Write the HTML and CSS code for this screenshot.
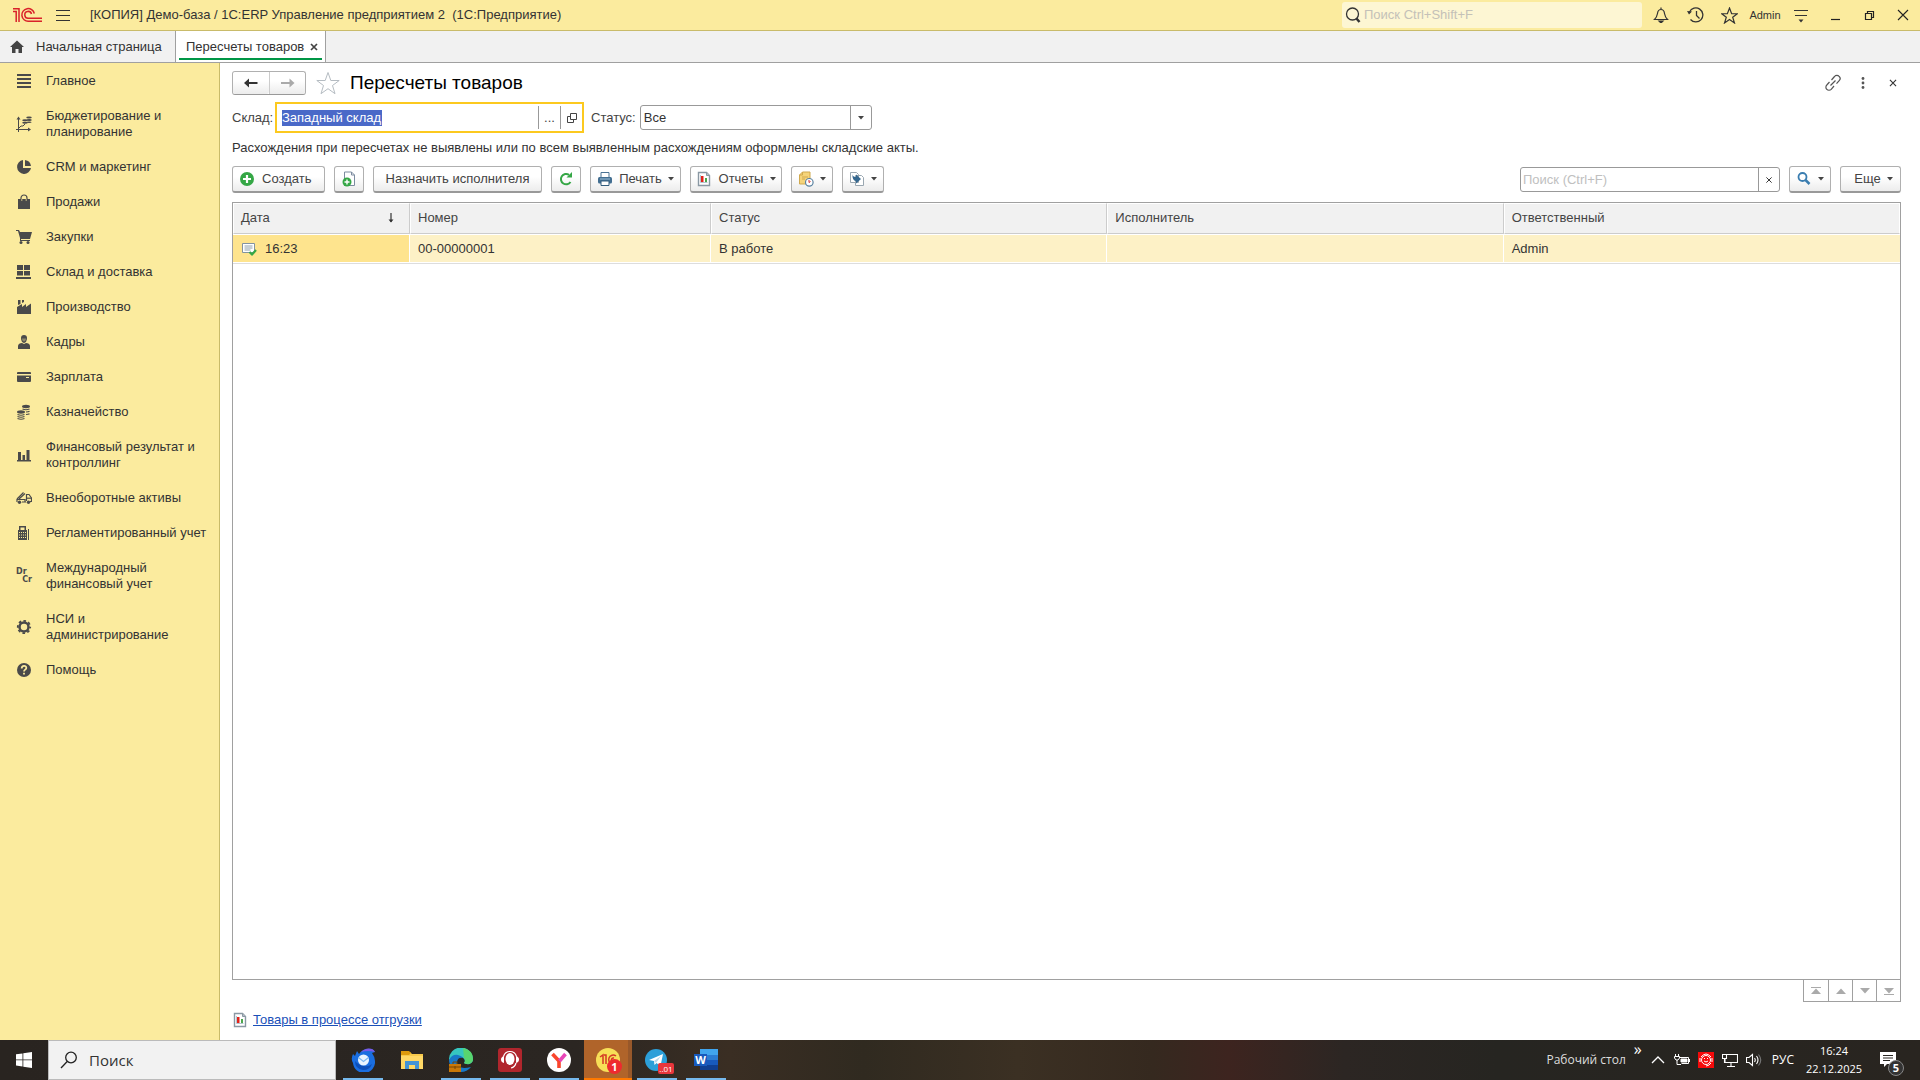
FILE: index.html
```html
<!DOCTYPE html>
<html lang="ru">
<head>
<meta charset="utf-8">
<title>Пересчеты товаров</title>
<link rel="stylesheet" href="styles.css">
</head>
<body>
<svg class="defs" width="0" height="0" aria-hidden="true">
  <symbol id="report" viewBox="0 0 16 16"><path d="M2.500 1.500h8l3 3v10h-11z" fill="#fff" stroke="#8a98a3" stroke-width="1.400"/><path d="M10.500 1.500v3h3" fill="#b4bec6" stroke="#8a98a3"/><path d="M4.500 4v7.500h7" fill="none" stroke="#b5c5d0"/><path d="M5 5h2.500v6H5z" fill="#e2231a"/><path d="M9 7h2v4H9z" fill="#4ca64c"/></symbol>
  <symbol id="close" viewBox="0 0 16 16"><path d="M4.500 4.500l7 7m0-7l-7 7" fill="none" stroke="currentColor" stroke-width="1.300"/></symbol>
  <symbol id="caret" viewBox="0 0 6 4"><path d="M0 0h6L3 3.500z" fill="currentColor"/></symbol>
</svg>
<div class="app">
  <header class="titlebar">
    <svg class="logo" width="31" height="18" viewBox="0 0 31 18" fill="none" stroke="#d9222a" stroke-width="1.500"><path d="M1 5.500h3.200V16M1 2.800h6V16"/><path d="M22.300 7.500A6.300 6.300 0 1 0 16.500 15.200h13.500M19.500 8A3.400 3.400 0 1 0 16.500 12.200h13.500"/></svg>
    <button class="flat" aria-label="Меню"><svg width="16" height="16" viewBox="0 0 16 16" stroke="#333" stroke-width="1"><path d="M1 3.500h14M1 8.500h14M1 13.500h14"/></svg></button>
    <div class="app-name">[КОПИЯ] Демо-база / 1С:ERP Управление предприятием 2&nbsp; (1С:Предприятие)</div>
    <label class="global-search"><svg width="16" height="18" viewBox="0 0 16 18" fill="none" stroke="#333"><circle cx="7.500" cy="8" r="6" stroke-width="1.300"/><path d="M11.500 12.500l3 3.500" stroke-width="2.500"/></svg><input type="text" placeholder="Поиск Ctrl+Shift+F" aria-label="Поиск"></label>
    <div class="title-tools">
      <button class="flat tool" aria-label="Уведомления"><svg width="16" height="16" viewBox="0 0 16 16" fill="none" stroke="#333" stroke-width="1.200"><path d="M8 .5v2M1.500 12.500h13c-2-2-2.500-3-3-6C11.200 3.500 10 2.500 8 2.500S4.800 3.500 4.500 6.500c-.5 3-1 4-3 6z"/><path d="M6 14h4l-2 2z" fill="#333"/></svg></button>
      <button class="flat tool" aria-label="История"><svg width="17" height="16" viewBox="0 0 17 16" fill="none" stroke="#333" stroke-width="1.300"><path d="M2.500 5A7 7 0 1 1 3.500 12.500M9.500 4v4.500l3 3"/><path d="M0 4l5 .5-3 3z" fill="#333" stroke="none"/></svg></button>
      <button class="flat tool" aria-label="Избранное"><svg width="17" height="17" viewBox="0 0 24 24" fill="none" stroke="#333" stroke-width="1.700"><path d="M12 1.500l3 8h8l-6.500 5 2.500 8-7-5-7 5 2.500-8L1 9.500h8z"/></svg></button>
      <button class="flat user">Admin</button>
      <button class="flat tool" aria-label="Сервис"><svg width="16" height="16" viewBox="0 0 16 16"><path d="M1 3.500h14M2 8.500h12" stroke="#333" stroke-width="1.200"/><path d="M5.500 12.500h5L8 15.500z" fill="#333"/></svg></button>
      <button class="flat tool" aria-label="Свернуть"><svg width="16" height="16" viewBox="0 0 16 16"><path d="M4 12.500h9" stroke="#222" stroke-width="1.200"/></svg></button>
      <button class="flat tool" aria-label="Развернуть"><svg width="16" height="16" viewBox="0 0 16 16" fill="none" stroke="#222" stroke-width="1.200"><path d="M4.500 6.500h6v6h-6zM6.500 6V4.500h6v6H11"/></svg></button>
      <button class="flat tool" aria-label="Закрыть"><svg width="16" height="16" viewBox="0 0 16 16" stroke="#222" stroke-width="1.100"><path d="M3 3l10 10M13 3L3 13"/></svg></button>
    </div>
  </header>
  <nav class="tabs">
    <a class="tab home" href="#"><svg width="16" height="16" viewBox="0 0 16 16" fill="#444"><path d="M8 1.500L1 8h2v6h3.500v-4h3v4H13V8h2z"/></svg>Начальная страница</a>
    <a class="tab active" href="#"><span>Пересчеты товаров</span><svg width="8" height="8" viewBox="0 0 8 8" stroke="#444" stroke-width="1.700"><path d="M1 1l6 6M7 1L1 7"/></svg></a>
  </nav>
  <div class="body">
    <nav class="sidebar">
      <a href="#"><svg viewBox="0 0 16 16"><path d="M1 1h14v2H1zM1 5h14v2H1zM1 9h14v2H1zM1 13h14v2H1z"/></svg><span>Главное</span></a>
      <a href="#"><svg viewBox="0 0 16 16"><path d="M2.500 2v14M0 13.500h13" stroke="#4a4a4a"/><path d="M.5 3.500l2-3 2 3zM12 11.500l3 2-3 2z"/><path d="M3 12l2-2h2l2-2" fill="none" stroke="#4a4a4a"/><ellipse cx="9" cy="4.300" rx="2.800" ry="1"/><ellipse cx="9" cy="6.700" rx="2.800" ry="1"/><ellipse cx="13" cy="1.600" rx="2.800" ry="1"/><ellipse cx="13.200" cy="4" rx="2.600" ry="1"/><ellipse cx="13" cy="6.200" rx="2.600" ry=".8"/></svg><span>Бюджетирование и планирование</span></a>
      <a href="#"><svg viewBox="0 0 16 16"><path d="M7 1v8h8A7 7 0 1 1 7 1z"/><path d="M9 1a7 7 0 0 1 6 6H9z"/></svg><span>CRM и маркетинг</span></a>
      <a href="#"><svg viewBox="0 0 16 16"><path d="M2 5h12v10H2z"/><path d="M5 7V4a3 3 0 0 1 6 0v3" fill="none" stroke="#4a4a4a" stroke-width="1.200"/><path d="M5.800 5v2M10.200 5v2" stroke="#fbeb9e" stroke-width=".7"/></svg><span>Продажи</span></a>
      <a href="#"><svg viewBox="0 0 16 16"><path d="M0 1h3l1 2h12l-2 7H5v1h9v1H4V9L2 2H0z"/><circle cx="5" cy="13.500" r="1.500"/><circle cx="12" cy="13.500" r="1.500"/></svg><span>Закупки</span></a>
      <a href="#"><svg viewBox="0 0 16 16"><path d="M1 1h6v5H1zM8 1h6v5H8zM1 7h6v4.500H1zM8 7h6v4.500H8zM0 13h15v2H0z"/></svg><span>Склад и доставка</span></a>
      <a href="#"><svg viewBox="0 0 16 16"><path d="M1 15V8l5-3v3l4-3v3l5-3.500V15zM2 1h2.500v4L2 6zM6 1h2v2L6 4z"/></svg><span>Производство</span></a>
      <a href="#"><svg viewBox="0 0 16 16"><path d="M5 4a3 3 0 0 1 6 0c0 2.500-1.200 5-3 5S5 6.500 5 4z"/><path d="M2 15v-3c0-2 2-3 4-3l2 1 2-1c2 0 4 1 4 3v3z"/><path d="M6 4.500h4c0 2-1 3-2 3s-2-1-2-3z" fill="#8f896b"/></svg><span>Кадры</span></a>
      <a href="#"><svg viewBox="0 0 16 16"><path d="M1 4q0-1 1-1h12q1 0 1 1v1H1zM1 6.500h14V12q0 1-1 1H2q-1 0-1-1z"/><path d="M10 8.500h3" stroke="#fbeb9e"/></svg><span>Зарплата</span></a>
      <a href="#"><svg viewBox="0 0 16 16"><ellipse cx="10" cy="2.500" rx="4" ry="1.700"/><path d="M6.500 5q3.500 1.500 7 0M10 8q2.500 0 3.500-.7M10 10.500q2.500 0 3.500-.7" fill="none" stroke="#4a4a4a" stroke-width="1.200"/><ellipse cx="5" cy="8" rx="4" ry="1.700"/><path d="M1.500 10.500q3.500 1.500 7 0M1.500 12.500q3.500 1.500 7 0M1.500 14.500q3.500 1.500 7 0" fill="none" stroke="#4a4a4a" stroke-width="1.100"/></svg><span>Казначейство</span></a>
      <a href="#"><svg viewBox="0 0 16 16"><path d="M1 13h14v1.500H1zM2 5h3v8H2zM6.500 8h2.500v5H6.500zM10.500 3h3v10h-3z"/></svg><span>Финансовый результат и контроллинг</span></a>
      <a href="#"><svg viewBox="0 0 16 16"><g fill="none" stroke="#4a4a4a" stroke-width="1.200"><path d="M1 12V9.500h8V12M6 12h4M1 9L7.500 2.500M3 9l6-5.500M10.500 11V4.500H13l2.500 3.500V11.500H14"/><path d="M10.500 8.200h5"/></g><circle cx="3.500" cy="12.300" r="1.700"/><circle cx="12.500" cy="12.300" r="1.700"/></svg><span>Внеоборотные активы</span></a>
      <a href="#"><svg viewBox="0 0 16 16"><path d="M2 5h1V1h7v4h1v10H2z"/><path d="M4.500 2.500h4V5h-4z" fill="#fbeb9e"/><path d="M3 7.500h7M3 10h7M3 12.500h7" stroke="#fbeb9e" stroke-dasharray="1 1"/><path d="M12.500 4v11" stroke="#4a4a4a"/></svg><span>Регламентированный учет</span></a>
      <a href="#"><span class="drcr"><b>Dr</b><b>Cr</b></span><span>Международный финансовый учет</span></a>
      <a href="#"><svg viewBox="0 0 16 16"><circle cx="8" cy="8" r="4.500" fill="none" stroke="#4a4a4a" stroke-width="2.500"/><circle cx="8" cy="8" r="6.200" fill="none" stroke="#4a4a4a" stroke-width="1.800" stroke-dasharray="2.600 2.270" stroke-dashoffset="1.300"/></svg><span>НСИ и администрирование</span></a>
      <a href="#"><svg viewBox="0 0 16 16"><circle cx="8" cy="8" r="7"/><path d="M5.700 6.500C5.700 3 10.500 3.200 10.300 6c0 1.600-2.300 1.700-2.300 3.500M8 10.700v1.800" fill="none" stroke="#fbeb9e" stroke-width="1.800"/></svg><span>Помощь</span></a>
    </nav>
    <main class="content">
      <div class="heading">
        <div class="history">
          <button aria-label="Назад"><svg width="16" height="12" viewBox="0 0 16 12"><path d="M4 6h10.500" stroke="#333" stroke-width="2"/><path d="M1 6l5-4.500v9z" fill="#333"/></svg></button>
          <button aria-label="Вперед"><svg width="16" height="12" viewBox="0 0 16 12"><path d="M1 6h10.500" stroke="#aaa" stroke-width="2"/><path d="M14.500 6l-5-4.500v9z" fill="#aaa"/></svg></button>
        </div>
        <button class="flat star" aria-label="В избранное"><svg width="24" height="24" viewBox="0 0 24 24" fill="#fff" stroke="#b5bcc2"><path d="M12 1.500l2.800 8h8.400l-6.700 5 2.500 8.200-7-5-7 5 2.500-8.200L.8 9.500h8.400z"/></svg></button>
        <h1>Пересчеты товаров</h1>
        <div class="form-tools">
          <button class="flat" aria-label="Ссылка"><svg width="18" height="18" viewBox="0 0 18 18" fill="none" stroke="#555" stroke-width="1.200"><path d="M7.500 6l3-3.500a3 3 0 0 1 4.700 0 3 3 0 0 1 0 4.200l-2.700 3M5.500 8L2.800 11a3 3 0 0 0 0 4.300 3 3 0 0 0 4.400 0L10 12M6.500 11.500l5-5"/></svg></button>
          <button class="flat" aria-label="Еще действия"><svg width="18" height="18" viewBox="0 0 18 18" fill="#555"><circle cx="9" cy="4.500" r="1.400"/><circle cx="9" cy="9" r="1.400"/><circle cx="9" cy="13.500" r="1.400"/></svg></button>
          <button class="flat" aria-label="Закрыть форму"><svg width="14" height="14"><use href="#close"/></svg></button>
        </div>
      </div>
      <div class="filters">
        <label for="store">Склад:</label>
        <div class="field">
          <div class="value"><input id="store" class="selected-text" type="text" value="Западный склад"></div>
          <button aria-label="Выбрать">...</button>
          <button aria-label="Открыть"><svg width="10" height="10" viewBox="0 0 10 10" fill="none" stroke="#444"><path d="M3.500.5h6v6h-6zM3 3.500H.5v6h6V7"/></svg></button>
        </div>
        <label for="status">Статус:</label>
        <div class="select"><select id="status"><option>Все</option></select><span><svg width="6" height="4"><use href="#caret"/></svg></span></div>
      </div>
      <p class="notice">Расхождения при пересчетах не выявлены или по всем выявленным расхождениям оформлены складские акты.</p>
      <div class="toolbar">
        <button class="btn create"><svg width="16" height="16" viewBox="0 0 16 16"><circle cx="8" cy="8" r="7" fill="#35a746"/><path d="M8 4v8M4 8h8" stroke="#fff" stroke-width="2.200"/></svg>Создать</button>
        <button class="btn square" aria-label="Создать копированием"><svg width="16" height="16" viewBox="0 0 16 16"><path d="M3.500 1h7l3 3v10.500h-10z" fill="#fff" stroke="#7c8ca0"/><path d="M10.500 1v3h3" fill="none" stroke="#7c8ca0"/><circle cx="6" cy="11" r="4.500" fill="#35a746"/><path d="M6 8.500v5M3.500 11h5" stroke="#fff" stroke-width="1.400"/></svg></button>
        <button class="btn assign">Назначить исполнителя</button>
        <button class="btn square" aria-label="Обновить"><svg width="16" height="16" viewBox="0 0 16 16"><path d="M12.500 11A5.200 5.200 0 1 1 11 3.800" fill="none" stroke="#35a746" stroke-width="2"/><path d="M8.500 6.500H14V1z" fill="#35a746"/></svg></button>
        <button class="btn print"><svg width="16" height="16" viewBox="0 0 16 16"><path d="M4 1.500h8v5H4z" fill="#fff" stroke="#4b7394"/><rect x="1" y="6" width="14" height="6.500" rx="1.500" fill="#426e91"/><path d="M4 10h8v4.500H4z" fill="#fff" stroke="#335d7e"/><path d="M3 8h10" stroke="#9fc0d8"/></svg>Печать<svg class="caret" width="6" height="4"><use href="#caret"/></svg></button>
        <button class="btn reports"><svg width="16" height="16"><use href="#report"/></svg>Отчеты<svg class="caret" width="6" height="4"><use href="#caret"/></svg></button>
        <button class="btn drop" aria-label="Напоминания"><svg width="16" height="16" viewBox="0 0 16 16"><path d="M1.500 4l3-3H12v12H1.500z" fill="#f5d47a" stroke="#d0a94e"/><path d="M1.500 4h3V1M4 6h6M4 8h3" fill="none" stroke="#d0a94e"/><circle cx="11.300" cy="11.300" r="3.800" fill="#fff" stroke="#58809f" stroke-width="1.200"/><path d="M11 9v2.500l1.500-1" fill="none" stroke="#d42d2d"/></svg><svg class="caret" width="6" height="4"><use href="#caret"/></svg></button>
        <button class="btn drop" aria-label="Создать на основании"><svg width="16" height="16" viewBox="0 0 16 16"><path d="M1.500 1.500h6l2 2v8h-8zM6.500 4.500h6l2 2v8h-8z" fill="#fff" stroke="#9aa7b1"/><path d="M3.500 3q0 3 3.500 3V3.500l5 4.500-5 4.500V10Q3 9.500 3.500 3z" fill="#34678f"/></svg><svg class="caret" width="6" height="4"><use href="#caret"/></svg></button>
        <div class="list-search"><input type="text" placeholder="Поиск (Ctrl+F)" aria-label="Поиск в списке"><button aria-label="Очистить"><svg width="12" height="12"><use href="#close"/></svg></button></div>
        <button class="btn drop" aria-label="Найти"><svg width="16" height="16" viewBox="0 0 16 16" fill="none" stroke="#3a7db0"><circle cx="6.500" cy="6" r="4" stroke-width="1.800"/><path d="M9.500 9l4 4" stroke-width="2.500"/></svg><svg class="caret" width="6" height="4"><use href="#caret"/></svg></button>
        <button class="btn more">Еще<svg class="caret" width="6" height="4"><use href="#caret"/></svg></button>
      </div>
      <div class="list">
        <table>
          <colgroup><col class="c-date"><col class="c-num"><col><col><col></colgroup>
          <thead><tr><th><div class="sorted">Дата<svg width="8" height="10" viewBox="0 0 8 10"><path d="M4 0v9" stroke="#333" stroke-width="1.200"/><path d="M1.500 6.500l2.500 3 2.500-3z" fill="#333"/></svg></div></th><th>Номер</th><th>Статус</th><th>Исполнитель</th><th>Ответственный</th></tr></thead>
          <tbody><tr><td class="current"><div class="date"><svg width="16" height="16" viewBox="0 0 16 16"><path d="M1.500 2.500h12v9h-12z" fill="#fff" stroke="#8393a0"/><path d="M3.500 5h8M3.500 7h8M3.500 9h6" stroke="#8fa0ac"/><path d="M8.500 11l2.500 2.500L15 9" fill="none" stroke="#35a746" stroke-width="2.200"/></svg>16:23</div></td><td>00-00000001</td><td>В работе</td><td></td><td>Admin</td></tr></tbody>
        </table>
      </div>
      <div class="pager">
        <button aria-label="В начало"><svg width="10" height="8" viewBox="0 0 10 8"><path d="M0 .5h10" stroke="#aaa"/><path d="M0 7h10L5 1.500z" fill="#aaa"/></svg></button>
        <button aria-label="Вверх"><svg width="10" height="8" viewBox="0 0 10 8"><path d="M0 7h10L5 1.500z" fill="#aaa"/></svg></button>
        <button aria-label="Вниз"><svg width="10" height="8" viewBox="0 0 10 8"><path d="M0 1h10L5 6.500z" fill="#aaa"/></svg></button>
        <button aria-label="В конец"><svg width="10" height="8" viewBox="0 0 10 8"><path d="M0 7.500h10" stroke="#aaa"/><path d="M0 1h10L5 6.500z" fill="#aaa"/></svg></button>
      </div>
      <div class="related"><svg width="16" height="16"><use href="#report"/></svg><a href="#">Товары в процессе отгрузки</a></div>
    </main>
  </div>
</div>
<footer class="taskbar">
  <button class="start" aria-label="Пуск"><svg width="16" height="16" viewBox="0 0 16 16" fill="#fff"><path d="M0 2.300L6.500 1.400v6.100H0zM7.300 1.300L16 0v7.500H7.300zM0 8.300h6.500v6.200L0 13.600zM7.300 8.300H16V16l-8.700-1.300z"/></svg></button>
  <label class="win-search"><svg width="18" height="18" viewBox="0 0 18 18" fill="none" stroke="#222" stroke-width="1.300"><circle cx="11" cy="6.500" r="5.300"/><path d="M7.200 10.500L1 17"/></svg><input type="text" placeholder="Поиск" aria-label="Поиск в Windows"></label>
  <div class="apps">
    <button class="running" aria-label="Thunderbird"><svg viewBox="0 0 24 24"><path d="M2 6l2 2 2-5 2 3Q12 0 21 1q2 1 3 3l-3 1q3 4 3 8a11 11 0 0 1-22 2Q-.5 11 2 6z" fill="#1a6ee0"/><path d="M10 4q5-5 11-3 2 1 3 3-7-2-14 0z" fill="#7a5be6"/><path d="M4 13q0 8 8 9 7 0 9-6-4 3-8 2-6-1-9-5z" fill="#0d4fb8"/><ellipse cx="12.500" cy="12" rx="5.500" ry="5.500" fill="#e9f5ff"/><path d="M7.500 9.500l5 4 5-4" fill="none" stroke="#7fb8f0" stroke-width="1.200"/></svg></button>
    <button aria-label="Проводник"><svg viewBox="0 0 24 24"><path d="M1 4h9l2 2h11v15H1z" fill="#f7c94b"/><path d="M1 3h8l2 2-2 2H1z" fill="#dd9a0d"/><path d="M1 8h22v13H1z" fill="#ffd866"/><path d="M5 21v-8h14v8h-4v-4H9v4z" fill="#4394d6"/></svg></button>
    <button class="running" aria-label="Edge"><svg viewBox="0 0 24 24"><path d="M0 12a12 12 0 0 1 24-1c0 6-7 6-9 4 2-2 0-6-4-6-5 0-11 3-11 3z" fill="#36c6c0"/><path d="M14 0q10 2 10 11c0 5-6 6-9 4 2-2 1-4 0-5z" fill="#58d56e"/><path d="M0 12q3-6 9-5 4 1 5 3-6-1-6 5 1 7 14 4-4 5-10 5A12 12 0 0 1 0 12z" fill="#1878c7"/><path d="M0 16h12v8H0z" fill="#c97808"/><path d="M0 19h12M4 16v-2h4v2M6 18v3" fill="none" stroke="#784400"/></svg></button>
    <button class="running" aria-label="Поддержка"><svg viewBox="0 0 24 24"><rect width="24" height="24" rx="3" fill="#b0262d"/><path d="M5.500 8.500Q7 3.500 12 3.500t6.500 5" fill="none" stroke="#fff" stroke-width="1.200"/><ellipse cx="12" cy="11" rx="4.500" ry="6" fill="#fff"/><path d="M6 8v7q-3-1-3-3.500T6 8zM18 8v7q3-1 3-3.500T18 8z" fill="#fff"/><path d="M18 15q-1 4-5 5" fill="none" stroke="#fff" stroke-width="1.200"/></svg></button>
    <button class="running" aria-label="Яндекс Браузер"><svg viewBox="0 0 24 24"><circle cx="12" cy="12" r="12" fill="#fff"/><path d="M5.500 6l6.500 7v7" fill="none" stroke="#f9452c" stroke-width="3.600"/><path d="M12.500 13l6-7" stroke="#e945b8" stroke-width="3.600"/></svg></button>
    <button class="running current-app" aria-label="1С:Предприятие"><svg viewBox="0 0 24 24"><circle cx="12" cy="12" r="12" fill="#f7df57"/><path d="M4 9l3-2v9M8 7h2v9M20 8a4.500 4.500 0 1 0-3 8h5M18 10a2 2 0 1 0-1 4" fill="none" stroke="#d43825" stroke-width="1.500"/></svg><span class="count">1</span></button>
    <button class="running" aria-label="Telegram"><svg viewBox="0 0 24 24"><circle cx="11" cy="12" r="11" fill="#2c9fd9"/><path d="M4 12l14-6-2.500 12-4-3-2 2-.5-4z" fill="#fff"/><path d="M9 13l7-5-5 7" fill="#b7d9ec"/></svg><span class="unread">..01</span></button>
    <button class="running" aria-label="Word"><svg viewBox="0 0 24 24"><path d="M6 1h18v6H6z" fill="#41a5ee"/><path d="M6 7h18v5H6z" fill="#2b7cd3"/><path d="M6 12h18v5H6z" fill="#185abd"/><path d="M6 17h18v5H6z" fill="#103f91"/><path d="M0 6h13v12H0z" fill="#185abd"/></svg><span class="word">W</span></button>
  </div>
  <div class="tray">
    <span class="desktop">Рабочий стол</span><span class="chev">»</span>
    <svg width="16" height="16" viewBox="0 0 16 16" fill="none" stroke="#fff" stroke-width="1.300"><path d="M2 11l6-6 6 6"/></svg>
    <svg width="16" height="16" viewBox="0 0 16 16" fill="none" stroke="#fff"><path d="M5.500 5.500h9v6h-7M1.500 2v2M4.500 2v2M.5 4.500h5V6l-1.500 2H2L.5 6zM3 8v4.500h4M15.500 7v3"/><path d="M7 7h6v3H7z" fill="#fff"/></svg>
    <svg width="16" height="16" viewBox="0 0 16 16"><path d="M0 0h16v16H0z" fill="#f50a0a"/><circle cx="8" cy="8" r="4.500" fill="none" stroke="#fff"/><path d="M2 6v4M14 6v4M3 5q5-6 10 0M13 11q-2 3-5 3M6 9q2 2 4 0M6.500 6v1M9.500 6v1" fill="none" stroke="#fff"/></svg>
    <svg width="16" height="16" viewBox="0 0 16 16" fill="none" stroke="#fff" stroke-width="1.100"><path d="M5 2.500h10.500v8H3V7M5 14.500h8M9 11v3M.5 2.500h4v4h-4zM2.500 6v5"/></svg>
    <svg width="16" height="16" viewBox="0 0 16 16" fill="none" stroke="#fff" stroke-width="1.100"><path d="M.5 5.500H3l3.500-3v11L3 10.500H.5zM8.500 6q1.500 2 0 4M10.500 4q3 4 0 8"/><path d="M12.500 2.500q4.500 5.500 0 11" stroke="#777"/></svg>
    <span class="lang">РУС</span>
    <span class="clock">16:24<br>22.12.2025</span>
    <button class="messages" aria-label="Центр уведомлений"><svg width="16" height="16" viewBox="0 0 16 16"><path d="M0 0h16v12H7l-3 3v-3H0z" fill="#fff"/><path d="M3 3.500h10M3 6h10M3 8.500h7" stroke="#2a2723"/></svg><span>5</span></button>
  </div>
</footer>
</body>
</html>
```
FILE: styles.css
```css
* { box-sizing: border-box; }
html, body { height: 100%; margin: 0; }
body {
  display: flex;
  flex-direction: column;
  font: 13px/16px "Liberation Sans", Arial, sans-serif;
  color: #333;
  background: #fff;
}
button, input, select { font: inherit; color: inherit; margin: 0; }
button { padding: 0; display: flex; align-items: center; justify-content: center; }
input { padding: 0; border: 0; background: none; outline: 0; min-width: 0; }
svg { display: block; flex: none; }
a { color: inherit; text-decoration: none; }
.defs { position: absolute; }
.flat { border: 0; background: none; }

.app { flex: 1; display: flex; flex-direction: column; min-height: 0; }

.titlebar {
  display: flex;
  align-items: center;
  height: 31px;
  padding-left: 12px;
  background: #fbeb9e;
  border-bottom: 1px solid #c9bb6a;
}
.titlebar > .flat { margin-left: 12px; }
.app-name { margin-left: 19px; flex: 1; white-space: nowrap; }
.global-search {
  display: flex;
  align-items: center;
  width: 300px;
  height: 26px;
  padding-left: 3px;
  gap: 3px;
  border-radius: 3px;
  background: #fdf6d3;
}
.global-search input { flex: 1; }
.global-search input::placeholder { color: #c4c1b8; opacity: 1; }
.title-tools { display: flex; align-items: center; margin-left: 2px; }
.tool { width: 34px; height: 30px; }
.user { width: 38px; font-size: 11px; }

.tabs {
  display: flex;
  height: 32px;
  background: #f1f1f1;
  border-bottom: 1px solid #a0a0a0;
}
.tab { display: flex; align-items: center; border-right: 1px solid #a0a0a0; white-space: nowrap; }
.home { width: 176px; padding-left: 9px; gap: 11px; }
.active {
  width: 150px;
  padding-left: 10px;
  gap: 6px;
  background: linear-gradient(#009646, #009646) 3px 27px / 143px 2px no-repeat #fff;
}

.body { flex: 1; display: flex; min-height: 0; }
.sidebar {
  width: 220px;
  flex: none;
  background: #fbeb9e;
  border-right: 1px solid #c9bb6a;
}
.sidebar a {
  display: flex;
  align-items: center;
  gap: 14px;
  padding: 10px 8px 9px 16px;
}
.sidebar svg { width: 16px; height: 16px; fill: #4a4a4a; }
.drcr { flex: none; width: 16px; font: bold 8px/8px "DejaVu Sans", sans-serif; color: #4a4a4a; }
.drcr b { display: block; }
.drcr b + b { text-align: right; }

.content {
  flex: 1;
  min-width: 0;
  display: flex;
  flex-direction: column;
  padding: 8px 19px 12px 12px;
}
.heading { display: flex; align-items: center; height: 24px; }
.history { display: flex; height: 24px; border: 1px solid #b0b0b0; border-bottom-color: #999; border-radius: 3px; }
.history button { width: 36px; border: 0; background: linear-gradient(#fff 40%, #ececec); border-radius: 3px; }
.history button + button { border-left: 1px solid #ccc; border-radius: 0 3px 3px 0; }
.star { margin: 0 10px; }
h1 { margin: 0; font-size: 19px; line-height: 24px; font-weight: normal; color: #000; }
.form-tools { display: flex; margin-left: auto; }
.form-tools button { width: 30px; }
.form-tools button:last-child { width: 16px; margin-left: 7px; }

.filters { display: flex; align-items: center; height: 31px; margin-top: 7px; color: #444; }
.filters label:first-child { width: 43px; }
.field { display: flex; width: 309px; height: 31px; padding: 2px 0; border: 2px solid #fcc91f; background: #fff; }
.value { flex: 1; display: flex; align-items: center; padding-left: 5px; }
.selected-text { width: 100px; height: 16px; background: #4a69c8; color: #fff; }
.field button { width: 22px; border: 0; border-left: 1px solid #999; background: none; }
.field + label { margin-left: 7px; }
.filters label + .select { margin-left: 4px; }
.select { position: relative; width: 232px; height: 25px; }
.select select { width: 100%; height: 100%; padding: 0 3px; border: 1px solid #999; border-radius: 3px; background: #fff; appearance: none; color: #333; }
.select span { position: absolute; right: 0; top: 0; width: 22px; height: 25px; display: grid; place-items: center; border-left: 1px solid #999; pointer-events: none; }

.notice { margin: 7px 0 0; line-height: 16px; }

.toolbar { display: flex; align-items: center; gap: 9px; height: 27px; margin-top: 10px; }
.btn {
  height: 27px;
  border: 1px solid #b0b0b0;
  border-bottom: 2px solid #999;
  border-radius: 3px;
  background: linear-gradient(#fff 40%, #ececec);
  color: #444;
  white-space: nowrap;
}
.create { width: 93px; gap: 7px; justify-content: flex-start; padding-left: 6px; }
.square { width: 30px; }
.assign { width: 169px; }
.print { width: 91px; gap: 6px; }
.reports { width: 92px; gap: 7px; }
.drop { width: 42px; gap: 6px; }
.more { width: 61px; gap: 6px; padding-left: 6px; }
.list-search { display: flex; width: 260px; height: 25px; margin-left: auto; border: 1px solid #999; border-radius: 3px; }
.list-search input { flex: 1; padding-left: 2px; }
.list-search input::placeholder { color: #c0c0c0; opacity: 1; }
.list-search button { width: 21px; border: 0; border-left: 1px solid #999; background: none; }

.list { flex: 1; min-height: 0; margin-top: 9px; border: 1px solid #a0a0a0; }
table { width: 100%; table-layout: fixed; border-collapse: separate; border-spacing: 0; }
.c-date { width: 177px; }
.c-num { width: 301px; }
th, td { text-align: left; font-weight: normal; }
th { height: 31px; padding: 0 7px 2px; background: #f1f1f1; border: 1px solid #fff; border-right-color: #ccc; border-bottom-color: #ccc; color: #444; }
th:last-child { border-right-color: #fff; }
td { height: 28px; padding: 0 8px; background: #fdf1c6; border: 1px solid #fff; border-left: 0; border-bottom: 0; }
tbody tr { box-shadow: 0 1px #fff, 0 2px #ddd; }
td:last-child { border-right: 0; }
.current { background: #fee48e; }
.sorted { display: flex; align-items: center; justify-content: space-between; padding-right: 7px; }
.date { display: flex; align-items: center; gap: 8px; }
.pager { display: flex; align-self: flex-end; border: 1px solid #a0a0a0; border-top: 0; }
.pager button { width: 24px; height: 21px; border: 0; background: none; }
.pager button + button { border-left: 1px solid #a0a0a0; }
.related { display: flex; align-items: center; gap: 5px; margin-top: 10px; }
.related a { color: #1a50b8; text-decoration: underline; }

.taskbar {
  display: flex;
  height: 40px;
  flex: none;
  font: 12px/16px "Open Sans", "Noto Sans", sans-serif;
  color: #fff;
  background: linear-gradient(90deg, #292420 0%, #2b2622 30%, #3a2e23 38%, #302a20 45%, #3b3023 53%, #35291f 60%, #3d241f 64%, #2c2623 70%, #262521 78%, #292520 100%);
}
.taskbar button { border: 0; background: none; color: #fff; }
.start { width: 48px; }
.win-search { display: flex; align-items: center; width: 288px; padding-left: 11px; gap: 11px; background: #f2f2f2; border: 1px solid #bbb; }
.win-search input { flex: 1; font-size: 15px; }
.win-search input::placeholder { color: #333; opacity: 1; }
.apps { display: flex; gap: 1px; margin-left: 3px; }
.apps button { position: relative; width: 48px; height: 40px; }
.apps svg { width: 24px; height: 24px; }
.apps .running { background: linear-gradient(#76b9ed, #76b9ed) center bottom / 40px 2px no-repeat; }
.apps .current-app { background: linear-gradient(#ff7900, #ff7900) center bottom / 48px 2px no-repeat, linear-gradient(90deg, #b0642a 44px, #98582a 44px); }
.count { position: absolute; right: 10px; bottom: 6px; width: 15px; height: 15px; border-radius: 50%; background: #ee2a2f; font: bold 11px/15px "Open Sans", sans-serif; }
.unread { position: absolute; right: 7px; bottom: 6px; width: 16px; height: 11px; border-radius: 2px; background: #e8363c; font-size: 8px; line-height: 11px; }
.word { position: absolute; left: 12px; top: 12px; width: 13px; font: bold 11px/16px "Open Sans", sans-serif; }
.tray { display: flex; align-items: center; gap: 8px; margin-left: auto; padding-right: 16px; }
.desktop { color: #ddd; }
.chev { align-self: flex-start; font-size: 16px; line-height: 18px; }
.lang { margin-left: 2px; }
.clock { width: 56px; margin: 0 2px 0 4px; text-align: center; font-size: 11px; line-height: 18px; }
.messages { position: relative; width: 32px; height: 40px; }
.messages span { position: absolute; right: 0; bottom: 4px; width: 16px; height: 16px; border: 1px solid #888; border-radius: 50%; background: #333; font-weight: bold; font-size: 11px; line-height: 14px; }
```
